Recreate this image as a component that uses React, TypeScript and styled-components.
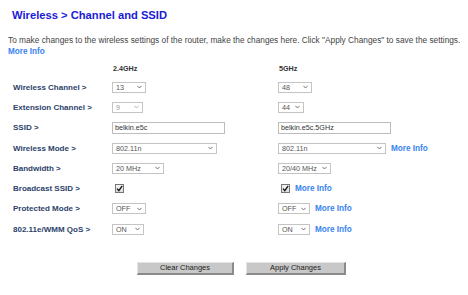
import styled, { createGlobalStyle } from "styled-components";

const GlobalStyle = createGlobalStyle`
  html, body {
    margin: 0;
    padding: 0;
    background: #ffffff;
  }
  body {
    font-family: "Liberation Sans", Arial, sans-serif;
  }
`;

const Page = styled.div`
  width: 468px;
  height: 295px;
  padding: 8px 8px 0 8px;
  box-sizing: border-box;
  overflow: hidden;
`;

const Title = styled.h1`
  margin: 0 0 0 4px;
  font-size: 11.2px;
  line-height: 15px;
  font-weight: bold;
  color: #1a1ad6;
`;

const Intro = styled.p`
  margin: 12px 0 0 0;
  font-size: 8.3px;
  line-height: 11px;
  color: #444444;
  white-space: nowrap;
`;

const Link = styled.a`
  color: #3a84f0;
  font-weight: bold;
  font-size: 8.2px;
  text-decoration: none;
  cursor: pointer;
`;

const Form = styled.div`
  margin: 2px 0 0 5px;
  display: grid;
  grid-template-columns: 99px 166px auto;
  grid-template-rows: 18px;
  grid-auto-rows: 20.3px;
  align-items: center;
`;

const BandHead = styled.div`
  font-size: 7.2px;
  font-weight: bold;
  color: #333333;
  padding-left: 1px;
`;

const Label = styled.div`
  font-size: 8px;
  font-weight: bold;
  color: #2c3f6b;
  white-space: nowrap;
`;

const Cell = styled.div`
  display: flex;
  align-items: center;
  gap: 5px;
`;

const SelectBox = styled.div<{ $w: number; $disabled?: boolean }>`
  width: ${(p) => p.$w}px;
  height: 11px;
  box-sizing: border-box;
  border: 1px solid #c4c4c4;
  background: #ffffff;
  display: flex;
  align-items: center;
  justify-content: space-between;
  padding: 0 3px 0 3px;
  font-size: 7.2px;
  color: ${(p) => (p.$disabled ? "#9a9a9a" : "#555555")};
`;

const Chevron = styled.svg<{ $disabled?: boolean }>`
  width: 5px;
  height: 4px;
  flex: none;
  stroke: ${(p) => (p.$disabled ? "#b0b0b0" : "#666666")};
`;

const TextInput = styled.div`
  width: 113px;
  height: 12px;
  box-sizing: border-box;
  border: 1px solid #bdbdbd;
  background: #ffffff;
  display: flex;
  align-items: center;
  padding-left: 2px;
  font-size: 7.2px;
  color: #333333;
`;

const Check = styled.div<{ $offset: number }>`
  width: 9px;
  height: 9px;
  box-sizing: border-box;
  margin-left: ${(p) => p.$offset}px;
  border: 1px solid #777777;
  background: linear-gradient(#f4f4f4, #dcdcdc);
  display: flex;
  align-items: center;
  justify-content: center;
`;

const Buttons = styled.div`
  display: flex;
  gap: 12px;
  margin-top: 23px;
  padding-left: 129px;
`;

const Button = styled.button<{ $w: number }>`
  width: ${(p) => p.$w}px;
  height: 13px;
  padding: 0;
  box-sizing: border-box;
  background: #c8c8c8;
  border-style: solid;
  border-width: 1px 2px 2px 1px;
  border-color: #e4e4e4 #8a8a8a #8a8a8a #e4e4e4;
  font-family: "Liberation Sans", Arial, sans-serif;
  font-size: 7.5px;
  color: #222222;
  line-height: 10px;
`;

function Select({ value, w, disabled }: { value: string; w: number; disabled?: boolean }) {
  return (
    <SelectBox $w={w} $disabled={disabled}>
      <span>{value}</span>
      <Chevron $disabled={disabled} viewBox="0 0 5 4" fill="none" strokeWidth="0.9">
        <path d="M0.4 0.8 L2.5 3 L4.6 0.8" />
      </Chevron>
    </SelectBox>
  );
}

function CheckBox({ offset }: { offset: number }) {
  return (
    <Check $offset={offset}>
      <svg width="7" height="7" viewBox="0 0 7 7">
        <path d="M1 3.6 L2.8 5.6 L6.2 0.8" fill="none" stroke="#111" strokeWidth="1.3" />
      </svg>
    </Check>
  );
}

const MoreInfo = () => <Link>More Info</Link>;

function App() {
  return (
    <>
      <GlobalStyle />
      <Page>
        <Title>Wireless &gt; Channel and SSID</Title>
        <Intro>
          To make changes to the wireless settings of the router, make the changes here. Click "Apply
          Changes" to save the settings.
          <br />
          <MoreInfo />
        </Intro>
        <Form>
          <div />
          <BandHead>2.4GHz</BandHead>
          <BandHead>5GHz</BandHead>

          <Label>Wireless Channel &gt;</Label>
          <Cell><Select value="13" w={34} /></Cell>
          <Cell><Select value="48" w={34} /></Cell>

          <Label>Extension Channel &gt;</Label>
          <Cell><Select value="9" w={31} disabled /></Cell>
          <Cell><Select value="44" w={26} /></Cell>

          <Label>SSID &gt;</Label>
          <Cell><TextInput>belkin.e5c</TextInput></Cell>
          <Cell><TextInput>belkin.e5c.5GHz</TextInput></Cell>

          <Label>Wireless Mode &gt;</Label>
          <Cell><Select value="802.11n" w={105} /></Cell>
          <Cell><Select value="802.11n" w={108} /><MoreInfo /></Cell>

          <Label>Bandwidth &gt;</Label>
          <Cell><Select value="20 MHz" w={52} /></Cell>
          <Cell><Select value="20/40 MHz" w={53} /></Cell>

          <Label>Broadcast SSID &gt;</Label>
          <Cell><CheckBox offset={3} /></Cell>
          <Cell><CheckBox offset={3} /><MoreInfo /></Cell>

          <Label>Protected Mode &gt;</Label>
          <Cell><Select value="OFF" w={34} /></Cell>
          <Cell><Select value="OFF" w={32} /><MoreInfo /></Cell>

          <Label>802.11e/WMM QoS &gt;</Label>
          <Cell><Select value="ON" w={32} /></Cell>
          <Cell><Select value="ON" w={32} /><MoreInfo /></Cell>
        </Form>
        <Buttons>
          <Button $w={97}>Clear Changes</Button>
          <Button $w={100}>Apply Changes</Button>
        </Buttons>
      </Page>
    </>
  );
}

export default App;
